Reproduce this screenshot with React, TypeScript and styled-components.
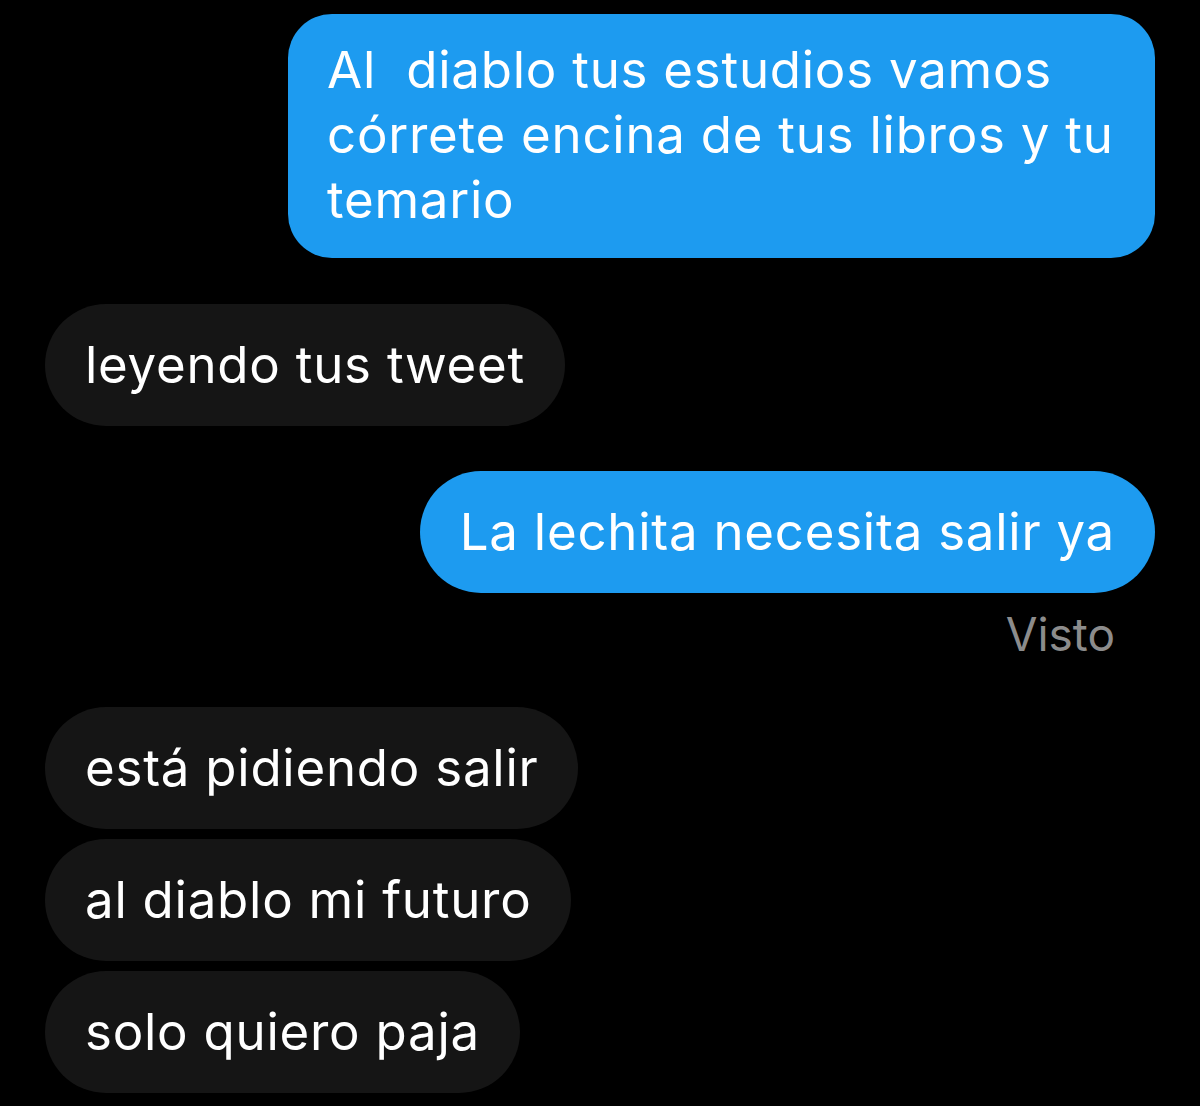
import React from "react";
import styled, { createGlobalStyle } from "styled-components";

const GlobalStyle = createGlobalStyle`
  html, body {
    margin: 0;
    padding: 0;
    background: #000000;
  }

  * {
    box-sizing: border-box;
  }
`;

const Thread = styled.div`
  width: 1200px;
  min-height: 1106px;
  padding: 14px 45px 0;
  display: flex;
  flex-direction: column;
  font-family: Inter, "Noto Sans", sans-serif;
  -webkit-font-smoothing: antialiased;
`;

const Group = styled.div<{ $mine?: boolean; $gap: number }>`
  display: flex;
  flex-direction: column;
  align-items: ${({ $mine }) => ($mine ? "flex-end" : "flex-start")};
  gap: 10px;
  margin-bottom: ${({ $gap }) => $gap}px;
`;

const Bubble = styled.div<{ $mine?: boolean; $multiline?: boolean }>`
  width: ${({ $multiline }) => ($multiline ? "867px" : "auto")};
  padding: ${({ $multiline }) => ($multiline ? "23px 20px 26px 39px" : "28px 40px 29px")};
  border-radius: ${({ $multiline }) => ($multiline ? "44px" : "61px")};
  background: ${({ $mine }) => ($mine ? "#1d9bf0" : "#151515")};
  color: #ffffff;
  font-size: 51px;
  line-height: 65px;
  font-weight: 400;
  letter-spacing: 0.75px;
  white-space: nowrap;
`;

const Seen = styled.span`
  margin-top: 3px;
  margin-right: 40px;
  color: #8c8c8c;
  font-size: 46px;
  line-height: 56px;
`;

const App: React.FC = () => {
  return (
    <>
      <GlobalStyle />
      <Thread>
        <Group $mine $gap={46}>
          <Bubble $mine $multiline>
            Al&nbsp; diablo tus estudios vamos
            <br />
            córrete encina de tus libros y tu
            <br />
            temario
          </Bubble>
        </Group>

        <Group $gap={45}>
          <Bubble>leyendo tus tweet</Bubble>
        </Group>

        <Group $mine $gap={45}>
          <Bubble $mine>La lechita necesita salir ya</Bubble>
          <Seen>Visto</Seen>
        </Group>

        <Group $gap={0}>
          <Bubble>está pidiendo salir</Bubble>
          <Bubble>al diablo mi futuro</Bubble>
          <Bubble>solo quiero paja</Bubble>
        </Group>
      </Thread>
    </>
  );
};

export default App;
